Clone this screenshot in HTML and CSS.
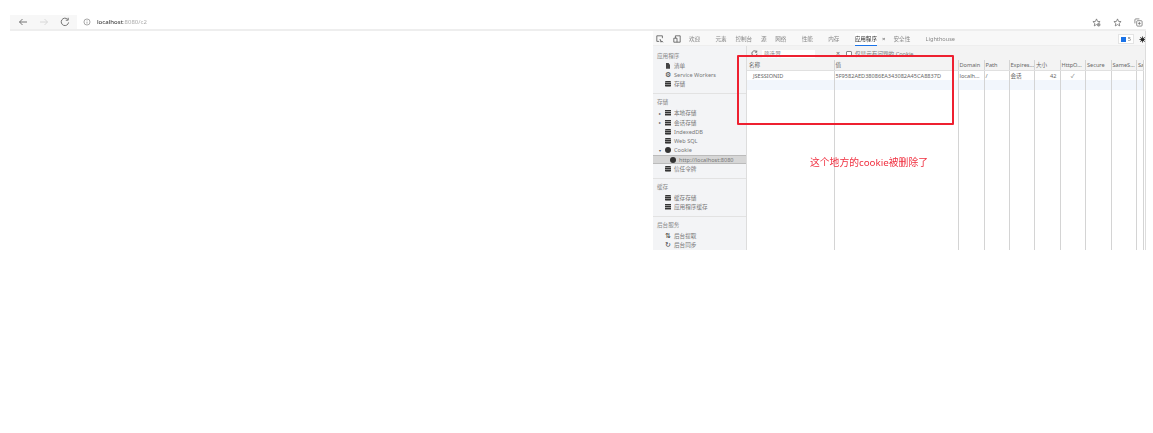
FILE: index.html
```html
<!DOCTYPE html>
<html lang="zh">
<head>
  <meta charset="utf-8">
  <title>localhost:8080/c2</title>
  <link rel="stylesheet" href="styles.css">
</head>
<body>
  <div class="shot">
    <div class="browser">
      <div class="nav">
        <div class="nav-btns">
          <svg class="ico back" viewBox="0 0 10 10"><path d="M9 5H1.500M4.500 2 1.500 5l3 3"/></svg>
          <svg class="ico fwd" viewBox="0 0 10 10"><path d="M1 5h7.500M5.500 2l3 3-3 3"/></svg>
          <svg class="ico" viewBox="0 0 10 10"><path d="M8.600 5.400A3.700 3.700 0 1 1 7.600 2.300M8.200 .8v2.400H5.800"/></svg>
        </div>
        <div class="address">
          <svg class="info" viewBox="0 0 10 10"><circle cx="5" cy="5" r="3.800"/><path d="M5 4.500v2.500M5 3v.7"/></svg>
          <span class="url"><b>localhost</b>:8080/c2</span>
        </div>
        <div class="nav-right">
          <svg class="ico small" viewBox="0 0 10 10"><path d="M5 1 6.200 3.800 9 4 6.900 5.900 7.500 8.800 5 7.300 2.500 8.800 3.100 5.900 1 4 3.800 3.800Z"/><circle class="spot" cx="7.500" cy="7.500" r="2"/></svg>
          <svg class="ico small" viewBox="0 0 10 10"><path d="M5 1 6.200 3.800 9 4 6.900 5.900 7.500 8.800 5 7.300 2.500 8.800 3.100 5.900 1 4 3.800 3.800Z"/></svg>
          <svg class="ico small" viewBox="0 0 10 10"><rect x="3" y="3" width="6" height="6" rx="1"/><path d="M1 6V2a1 1 0 0 1 1-1h4M6 4.500v3M4.500 6h3"/></svg>
        </div>
      </div>

      <div class="devtools">
        <div class="tabs">
          <svg class="tool" viewBox="0 0 10 10"><path d="M4 8H1V1h7v3M5 5l1.300 4 .8-1.500L9 9"/></svg>
          <svg class="tool second" viewBox="0 0 10 10"><path d="M1 4h4v5H1zM3 4V1h6v8H5"/></svg>
          <span class="tab">欢迎</span>
          <span class="tab">元素</span>
          <span class="tab tight">控制台</span>
          <span class="tab tight">源</span>
          <span class="tab tight">网络</span>
          <span class="tab">性能</span>
          <span class="tab">内存</span>
          <span class="tab active">应用程序</span>
          <span class="tab-x">×</span>
          <span class="tab near">安全性</span>
          <span class="tab">Lighthouse</span>
          <span class="issues"><i class="issue-dot"></i>5</span>
          <svg class="gear" viewBox="0 0 10 10"><circle cx="5" cy="5" r="2.200"/><path d="M5 .8v1.500M5 7.700v1.500M.8 5h1.500M7.700 5h1.500M2 2l1.100 1.100M6.900 6.900 8 8M8 2 6.900 3.100M3.100 6.900 2 8"/></svg>
        </div>

        <div class="panes">
          <aside class="side">
            <div class="side-head">应用程序</div>
            <div class="item"><span class="glyph doc"></span>清单</div>
            <div class="item"><span class="glyph sign">⚙</span>Service Workers</div>
            <div class="item"><span class="glyph db"></span>存储</div>
            <div class="side-head ruled">存储</div>
            <div class="item top-gap"><span class="arrow">▸</span><span class="glyph grid"></span>本地存储</div>
            <div class="item"><span class="arrow">▸</span><span class="glyph grid"></span>会话存储</div>
            <div class="item"><span class="glyph db"></span>IndexedDB</div>
            <div class="item"><span class="glyph db"></span>Web SQL</div>
            <div class="item"><span class="arrow">▾</span><span class="glyph cookie"></span>Cookie</div>
            <div class="item sub selected"><span class="glyph cookie"></span>http://localhost:8080</div>
            <div class="item"><span class="glyph db"></span>信任令牌</div>
            <div class="side-head ruled">缓存</div>
            <div class="item top-gap"><span class="glyph db"></span>缓存存储</div>
            <div class="item"><span class="glyph grid"></span>应用程序缓存</div>
            <div class="side-head ruled last">后台服务</div>
            <div class="item"><span class="glyph sign">⇅</span>后台提取</div>
            <div class="item"><span class="glyph sign">↻</span>后台同步</div>
          </aside>

          <main class="main">
            <div class="filter">
              <svg class="refresh" viewBox="0 0 10 10"><path d="M8.600 5.400A3.700 3.700 0 1 1 7.600 2.300M8.200 .8v2.400H5.800"/></svg>
              <span class="filter-input">筛选器</span>
              <span class="clear">×</span>
              <span class="check"></span>
              <span class="only">仅显示有问题的 Cookie</span>
            </div>
            <table class="cookies">
              <colgroup>
                <col class="c-name"><col class="c-value"><col class="c-domain"><col class="c-path">
                <col class="c-std"><col class="c-std"><col class="c-std"><col class="c-std"><col class="c-std"><col>
              </colgroup>
              <thead>
                <tr><th>名称</th><th>值</th><th>Domain</th><th>Path</th><th>Expires...</th><th>大小</th><th>HttpO...</th><th>Secure</th><th>SameS...</th><th>Sa</th></tr>
              </thead>
              <tbody>
                <tr>
                  <td class="indent">JSESSIONID</td><td>5F9582AED38086EA343082A45CA8837D</td><td>localh...</td><td>/</td><td>会话</td><td class="num">42</td><td class="tick">✓</td><td></td><td></td><td></td>
                </tr>
                <tr class="alt"><td></td><td></td><td></td><td></td><td></td><td></td><td></td><td></td><td></td><td></td></tr>
                <tr class="fill"><td></td><td></td><td></td><td></td><td></td><td></td><td></td><td></td><td></td><td></td></tr>
              </tbody>
            </table>
          </main>
        </div>
      </div>
    </div>

    <div class="red-box"></div>
    <div class="note">这个地方的cookie被删除了</div>
  </div>
</body>
</html>
```

FILE: styles.css
```css
html, body { margin: 0; padding: 0; background: #fff; }
body { width: 1153px; height: 433px; overflow: hidden; font-family: "Noto Sans", "Noto Sans CJK SC", sans-serif; color: #555; }

.shot { position: relative; width: 1153px; height: 433px; }
.browser { padding: 15px 7px 0 10px; filter: blur(.35px); }

/* browser toolbar */
.nav { display: flex; align-items: center; height: 14px; border-bottom: 2px solid #eee; }
.nav-btns { display: flex; align-items: center; gap: 11px; width: 59px; height: 14px; padding-left: 8px; background: #f7f7f7; }
.ico { width: 10px; height: 10px; fill: none; stroke: #666; stroke-width: .9; }
.ico.fwd { stroke: #d4d4d4; }
.address { display: flex; align-items: center; flex: 1; padding-left: 6px; }
.info { width: 8px; height: 8px; fill: none; stroke: #777; stroke-width: .8; }
.url { margin-left: 6px; font-size: 6px; color: #aaa; }
.url b { font-weight: 500; color: #444; }
.nav-right { display: flex; align-items: center; gap: 12px; padding-right: 3px; }
.ico.small { width: 9px; height: 9px; stroke-width: .8; }
.spot { fill: #999; stroke: none; }

/* devtools */
.devtools { width: 492px; height: 219px; margin-left: 643px; overflow: hidden; border-right: 1px solid #ddd; }
.tabs { display: flex; align-items: center; height: 15px; padding: 2px 0 0 3px; font-size: 5.600px; color: #888; background: #f8f8f8; border-bottom: 1px solid #eee; box-sizing: border-box; }
.tool { width: 8px; height: 8px; fill: none; stroke: #444; stroke-width: .9; }
.tool.second { margin-left: 9px; }
.tab { margin-left: 15.300px; line-height: 13px; }
.tab:first-of-type { margin-left: 8px; }
.tab.tight { margin-left: 8.700px; }
.tab.near { margin-left: 8px; }
.tab.active { color: #333; background: #fff; border-bottom: 1px solid #1a73e8; line-height: 12px; }
.tab-x { margin-left: 5px; font-size: 6px; color: #555; }
.issues { display: flex; align-items: center; gap: 2px; margin-left: auto; padding: 0 2px; height: 8px; border: 1px solid #e4e4e4; background: #fff; color: #666; }
.issue-dot { width: 5px; height: 5px; background: #1a73e8; }
.gear { width: 7px; height: 7px; margin: 0 -1px 0 5px; fill: #222; stroke: #222; stroke-width: 1.400; }

.panes { display: flex; height: 204px; }
.side { width: 94px; padding-top: 6px; background: #f3f4f6; border-right: 1px solid #ddd; box-sizing: border-box; font-size: 5.600px; color: #777; }
.side-head { height: 9px; line-height: 9px; padding-left: 4px; color: #888; }
.side-head.ruled { margin-top: 4.500px; padding-top: 4px; border-top: 1px solid #e2e2e2; }
.side-head.last { margin-top: 4px; padding-bottom: 1px; }
.item { display: flex; align-items: center; height: 9.250px; padding-left: 12px; white-space: nowrap; box-sizing: border-box; }
.item.top-gap { margin-top: 1.500px; }
.item.sub { padding-left: 17px; }
.item.selected { background: #d6d6d6; border-top: 1px solid #bbb; border-bottom: 1px solid #bbb; }
.arrow { width: 4px; margin-left: -6px; margin-right: 2px; font-size: 4px; color: #555; }
.glyph { display: inline-block; width: 6px; height: 6px; margin-right: 3px; flex: none; background: #444; }
.glyph.doc { width: 4px; margin-left: 1px; margin-right: 4px; clip-path: polygon(0 0, 60% 0, 100% 35%, 100% 100%, 0 100%); }
.glyph.db { border-radius: 1px; background: repeating-linear-gradient(#333 0 1.400px, #888 1.400px 2px); }
.glyph.grid { background: repeating-linear-gradient(#333 0 1.200px, #999 1.200px 2px); }
.glyph.cookie { border-radius: 50%; background: #333; }
.glyph.sign { background: none; font-family: "DejaVu Sans", sans-serif; font-size: 7px; line-height: 6px; color: #333; }

.main { flex: 1; min-width: 0; background: #fff; }
.filter { display: flex; align-items: center; height: 13px; padding-top: 1px; background: #f3f3f3; font-size: 5.600px; color: #777; }
.refresh { width: 7px; height: 7px; margin-left: 4px; fill: none; stroke: #444; stroke-width: 1; }
.filter-input { width: 51px; height: 8px; line-height: 8px; margin-left: 4px; padding-left: 2px; background: #fff; color: #888; }
.clear { margin-left: 21px; font-size: 7px; color: #666; }
.check { width: 4px; height: 4px; margin-left: 6px; border: 1px solid #888; border-radius: 1px; background: #fff; }
.only { margin-left: 3px; }

.cookies { width: 397px; height: 190px; border-collapse: collapse; table-layout: fixed; font-size: 5.600px; color: #666; }
.c-name { width: 87px; }
.c-value { width: 124px; }
.c-domain { width: 26px; }
.c-path { width: 25px; }
.c-std { width: 25.500px; }
.cookies th, .cookies td { height: 10px; padding: 1px 1px 0; border-right: 1px solid #d4d4d4; font-weight: 400; text-align: left; white-space: nowrap; overflow: hidden; box-sizing: border-box; }
.cookies th { background: #f3f3f3; border-bottom: 1px solid #e0e0e0; }
.cookies th:first-child { padding-left: 2px; }
.cookies td.indent { padding-left: 6px; }
.cookies td.num { text-align: right; padding-right: 3px; }
.cookies td.tick { text-align: center; }
.alt td { background: #f2f6fc; }
.fill td { height: auto; }

/* annotation drawn over the screenshot */
.red-box { position: absolute; left: 737px; top: 55px; width: 213px; height: 66px; border: 2px solid #ee2030; border-radius: 1px; filter: blur(.3px); }
.note { position: absolute; left: 810px; top: 156px; font-size: 9.800px; line-height: 14px; color: #f03040; white-space: nowrap; filter: blur(.25px); }
```
